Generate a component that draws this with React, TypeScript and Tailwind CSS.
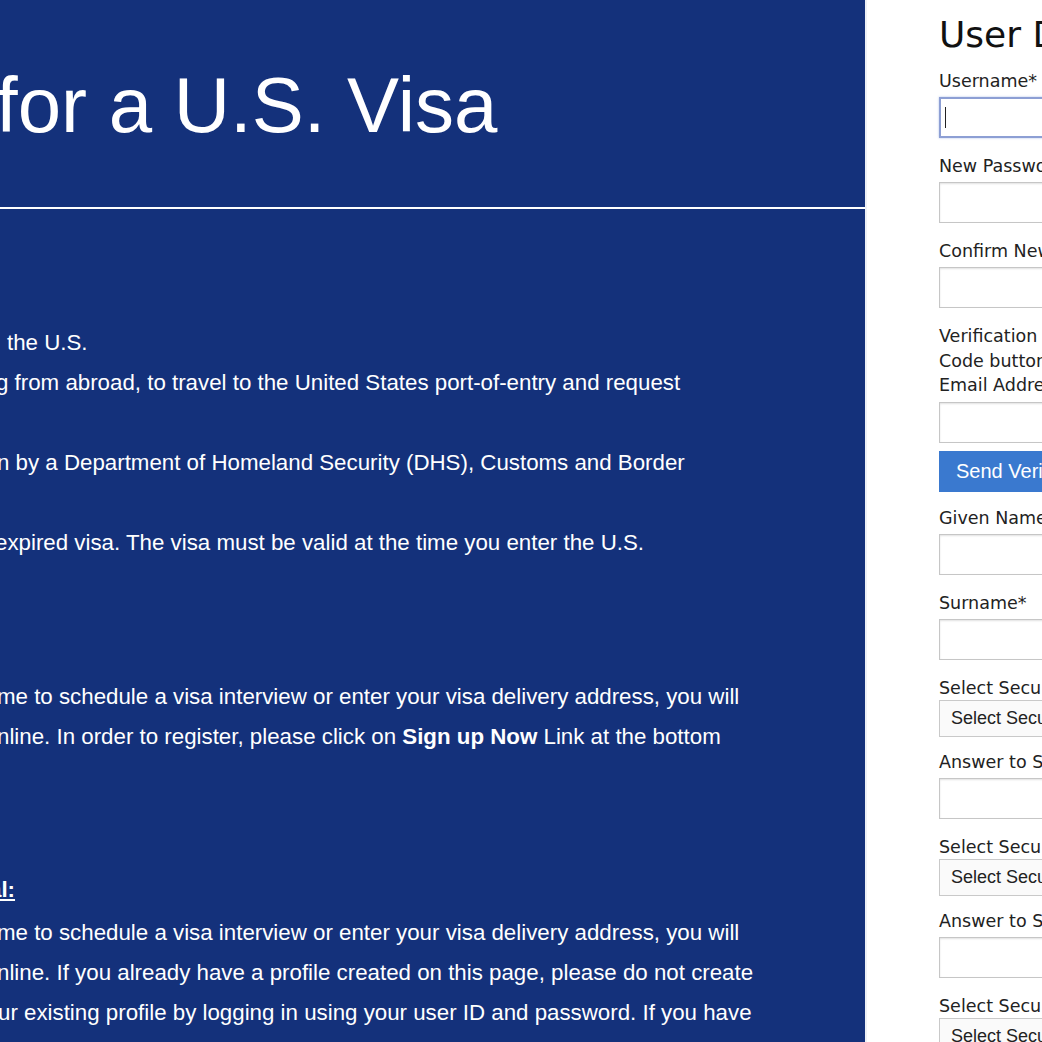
import * as React from 'react'

const sans = { fontFamily: '"Liberation Sans", Arial, Helvetica, sans-serif' }

function Line(props: { children?: React.ReactNode; shift?: string }) {
  return (
    <div className={`h-[40px] leading-[40px] whitespace-nowrap ${props.shift ?? ''}`}>
      {props.children}
    </div>
  )
}

function Label(props: { children: React.ReactNode }) {
  return <div className="h-6 leading-6 whitespace-nowrap">{props.children}</div>
}

function TextBox(props: { focused?: boolean }) {
  if (props.focused) {
    return (
      <div className="mt-1 h-[41px] w-[420px] border-2 border-[#8d9fd4] bg-white flex items-center pl-[4px] shadow-[0_0_2px_rgba(120,150,220,0.6)]">
        <span className="block h-[21px] w-px bg-[#222]" />
      </div>
    )
  }
  return (
    <div className="mt-1 h-[41px] w-[420px] border border-[#c6c6c6] bg-white shadow-[inset_0_1px_2px_rgba(0,0,0,0.12)]" />
  )
}

function SelectBox() {
  return (
    <div
      className="h-[37px] w-[420px] border border-[#c9c9c9] bg-[#fafafa] flex items-center pl-[11px] text-[18px] text-[#222]"
      style={sans}
    >
      Select Security Question
    </div>
  )
}

function Field(props: { label: string; focused?: boolean }) {
  return (
    <div className="mb-4">
      <Label>{props.label}</Label>
      <TextBox focused={props.focused} />
    </div>
  )
}

function SelectField(props: { label: string }) {
  return (
    <div className="mb-[13px]">
      <Label>{props.label}</Label>
      <SelectBox />
    </div>
  )
}

export default function App() {
  return (
    <div className="w-[1042px] h-[1042px] overflow-hidden flex bg-white">
      {/* left info panel, scrolled so its left edge is off screen */}
      <div className="w-[865px] shrink-0 h-full bg-[#14317b] text-white overflow-hidden" style={sans}>
        <h1 className="mt-[66px] -ml-[4px] text-[78px] leading-[78px] whitespace-nowrap">
          for a U.S. Visa
        </h1>
        <div className="mt-[63px] h-[2px] bg-white" />

        <div className="mt-[114px] text-[22.3px]">
          <Line shift="pl-[7px]">the U.S.</Line>
          <Line shift="-ml-[4px]">g from abroad, to travel to the United States port-of-entry and request</Line>
          <Line />
          <Line shift="-ml-[3px]">n by a Department of Homeland Security (DHS), Customs and Border</Line>
          <Line />
          <Line shift="-ml-[5px]">expired visa. The visa must be valid at the time you enter the U.S.</Line>
        </div>

        <div className="mt-[114px] text-[22.3px]">
          <Line shift="-ml-[3px]">me to schedule a visa interview or enter your visa delivery address, you will</Line>
          <Line shift="-ml-[3px]">
            nline. In order to register, please click on <b>Sign up Now</b> Link at the bottom
          </Line>
        </div>

        <div className="mt-[113px] text-[22.3px]">
          <Line shift="-ml-[11px]">
            <b className="underline underline-offset-2">al:</b>
          </Line>
        </div>

        <div className="mt-[3px] text-[22.3px]">
          <Line shift="-ml-[3px]">me to schedule a visa interview or enter your visa delivery address, you will</Line>
          <Line shift="-ml-[3px]">
            nline. If you already have a profile created on this page, please do not create
          </Line>
          <Line shift="-ml-[2px]">
            ur existing profile by logging in using your user ID and password. If you have
          </Line>
        </div>
      </div>

      {/* registration form */}
      <div
        className="flex-1 min-w-0 border-l-2 border-[#eef1f6] pl-[72px] pt-[15px] text-[17.5px] text-[#222]"
        style={{ fontFamily: '"DejaVu Sans", Verdana, Tahoma, sans-serif' }}
      >
        <div className="h-[40px] leading-[40px] text-[36px] text-[#111] whitespace-nowrap">
          User Details
        </div>
        <div className="mt-[14px]">
          <Field label="Username*" focused />
          <Field label="New Password*" />
          <Field label="Confirm New Password*" />

          <div className="leading-[24.5px] whitespace-nowrap">
            <div>Verification Code*: Click on Send Verification</div>
            <div>Code button to receive the code on your</div>
            <div>Email Address</div>
          </div>
          <TextBox />
          <button
            className="mt-2 mb-[14px] h-[41px] w-[420px] bg-[#3a79cf] text-white text-left pl-[17px] text-[20px]"
            style={sans}
          >
            Send Verification Code
          </button>

          <Field label="Given Name*" />
          <Field label="Surname*" />
          <SelectField label="Select Security Question 1*" />
          <Field label="Answer to Security Question 1*" />
          <SelectField label="Select Security Question 2*" />
          <Field label="Answer to Security Question 2*" />
          <SelectField label="Select Security Question 3*" />
        </div>
      </div>
    </div>
  )
}
